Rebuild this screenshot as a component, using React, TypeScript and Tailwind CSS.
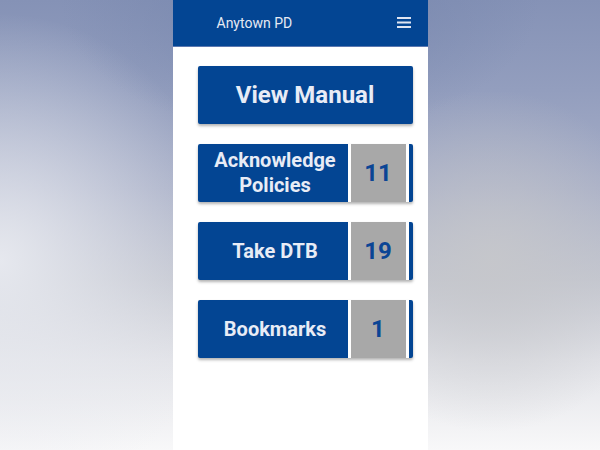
import React from "react";

function CountButton({ label, count }: { label: React.ReactNode; count: string }) {
  return (
    <div className="flex h-[58px] w-[215px] rounded-[2px] bg-[#034593] shadow-[0_2px_3px_rgba(0,0,0,0.3)] overflow-hidden">
      <div className="flex w-[150px] items-center justify-center pl-[5px] text-center text-[20px] leading-[25px] font-bold text-[#e8ecf6]">
        {label}
      </div>
      <div className="flex w-[61px] items-center justify-center border-x-[3px] border-white bg-[#a8a8a8] text-[24px] font-bold text-[#0b4595]">
        {count}
      </div>
    </div>
  );
}

export default function App() {
  return (
    <div
      className="flex h-[450px] w-[600px] justify-center overflow-hidden bg-[radial-gradient(ellipse_40%_30%_at_50%_0%,rgba(118,134,173,0.9),rgba(118,134,173,0)),radial-gradient(ellipse_38%_55%_at_0%_58%,rgba(232,234,240,0.95),rgba(232,234,240,0)),radial-gradient(ellipse_28%_38%_at_82%_58%,rgba(198,199,203,0.9),rgba(198,199,203,0)),linear-gradient(to_bottom,#8592b6_0%,#939ebe_20%,#a8afc7_42%,#c3c6d0_62%,#e2e3e8_80%,#f8f8f9_100%)]"
      style={{ fontFamily: "Roboto, 'Liberation Sans', sans-serif" }}
    >
      <div className="flex h-full w-[255px] flex-col bg-white">
        <div className="flex h-[47px] shrink-0 items-center justify-between border-b border-[#5b78b0] bg-[#034593] pl-[44px] pr-[17px]">
          <span className="text-[14px] text-[#e6eaf3]">Anytown PD</span>
          <svg width="14" height="11" viewBox="0 0 14 11" className="mb-[1px]">
            <rect x="0" y="0" width="14" height="2" fill="#dfe5f2" />
            <rect x="0" y="4.5" width="14" height="2" fill="#dfe5f2" />
            <rect x="0" y="9" width="14" height="2" fill="#dfe5f2" />
          </svg>
        </div>
        <div className="flex flex-col gap-[20px] pl-[25px] pt-[19px]">
          <div className="flex h-[58px] w-[215px] items-center justify-center rounded-[2px] bg-[#034593] text-[24px] font-bold text-[#e8ecf6] shadow-[0_2px_3px_rgba(0,0,0,0.3)]">
            View Manual
          </div>
          <CountButton
            label={
              <span>
                Acknowledge
                <br />
                Policies
              </span>
            }
            count="11"
          />
          <CountButton label="Take DTB" count="19" />
          <CountButton label="Bookmarks" count="1" />
        </div>
      </div>
    </div>
  );
}
